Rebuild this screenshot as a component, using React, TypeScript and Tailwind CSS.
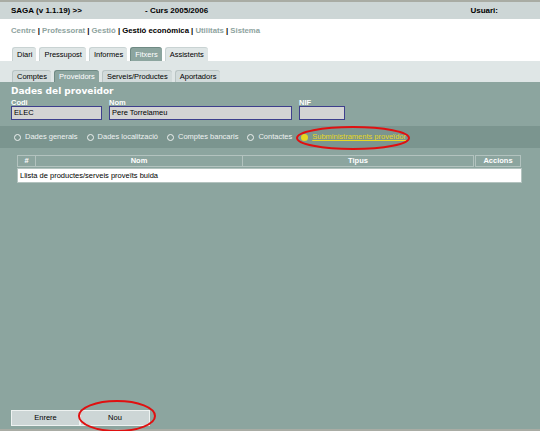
export default function App() {
  const tabs = ["Diari", "Pressupost", "Informes", "Fitxers", "Assistents"];
  const subTabs = ["Comptes", "Proveidors", "Serveis/Productes", "Aportadors"];
  const radios = ["Dades generals", "Dades localització", "Comptes bancaris", "Contactes"];

  return (
    <div className="relative flex h-[431px] w-[540px] flex-col overflow-hidden bg-[#8ca59f] font-['Liberation_Sans',Arial,sans-serif] text-[8px] leading-none text-black">
      {/* top bar */}
      <div className="h-[2px] bg-[#a9aca4]" />
      <div className="flex h-[17px] items-center bg-[#cdd6d6] font-bold">
        <span className="ml-[11px] w-[134px]">SAGA (v 1.1.19) &gt;&gt;</span>
        <span>- Curs 2005/2006</span>
        <span className="ml-auto mr-[42px]">Usuari:</span>
      </div>

      {/* menu */}
      <div className="flex h-[42px] flex-col bg-white">
        <div className="ml-[11px] mt-[8px] text-[7.75px] font-bold text-[#8ea39e]">
          Centre <span className="text-black">|</span> Professorat <span className="text-black">|</span> Gestió{" "}
          <span className="text-black">| Gestió econòmica |</span> Utilitats <span className="text-black">|</span> Sistema
        </div>
        <div className="mt-auto ml-[12px] flex gap-[3px] text-[7.5px]">
          {tabs.map((t) => (
            <div
              key={t}
              className={
                t === "Fitxers"
                  ? "flex h-[14px] items-center rounded-t-[3px] border-l border-t border-[#6f8a84] bg-[#8ca59f] px-[4px] text-white"
                  : "flex h-[14px] items-center rounded-t-[3px] border-l border-t border-[#c9d3d3] bg-[#dfe6e6] px-[4px]"
              }
            >
              {t}
            </div>
          ))}
        </div>
      </div>

      {/* sub menu */}
      <div className="flex h-[21px] flex-col bg-[#dfe6e6]">
        <div className="mt-auto ml-[12px] flex gap-[3px] text-[7.5px]">
          {subTabs.map((t) => (
            <div
              key={t}
              className={
                t === "Proveidors"
                  ? "flex h-[12px] items-center rounded-t-[3px] border-l border-t border-[#6f8a84] bg-[#8ca59f] px-[4px] text-white"
                  : "flex h-[12px] items-center rounded-t-[3px] border-l border-t border-[#b9c4c4] bg-[#d2dbdb] px-[4px]"
              }
            >
              {t}
            </div>
          ))}
        </div>
      </div>

      {/* provider header */}
      <div className="px-[11px] pt-[5px]">
        <div className="font-['DejaVu_Sans',Verdana,sans-serif] text-[9px] font-bold text-white">
          Dades del proveidor
        </div>
        <div className="mt-[3px] flex">
          <div className="w-[98px]">
            <div className="h-[7px] text-[7.5px] font-bold text-white">Codi</div>
            <div className="flex h-[14px] w-[91px] items-center border border-[#3e3f8c] bg-[#d4d4d4] pl-[2px] text-[7.5px]">ELEC</div>
          </div>
          <div className="w-[190px]">
            <div className="h-[7px] text-[7.5px] font-bold text-white">Nom</div>
            <div className="flex h-[14px] w-[183px] items-center border border-[#3e3f8c] bg-[#d4d4d4] pl-[2px] text-[7.5px]">Pere Torrelameu</div>
          </div>
          <div>
            <div className="h-[7px] text-[7.5px] font-bold text-white">NIF</div>
            <div className="h-[14px] w-[46px] border border-[#3e3f8c] bg-[#d4d4d4]" />
          </div>
        </div>
      </div>

      {/* options */}
      <div className="mt-[6px] flex h-[22px] items-center bg-[#7b958f] pl-[14px] text-[7.5px] text-[#eef2f1]">
        {radios.map((r) => (
          <div key={r} className="mr-[9px] flex items-center gap-[4px]">
            <span className="h-[7px] w-[7px] rounded-full border border-[#eef2f1]" />
            <span>{r}</span>
          </div>
        ))}
        <div className="flex items-center gap-[4px]">
          <span className="h-[7px] w-[7px] rounded-full bg-[#e6d822]" />
          <span className="text-[#e6d822] underline">Subministraments proveïdor</span>
        </div>
      </div>

      {/* table */}
      <div className="ml-[17px] mt-[7px] w-[505px] text-[7.5px]">
        <div className="flex h-[12px] font-bold text-white">
          <div className="flex w-[19px] items-center justify-center border border-[#b3c3bf] bg-[#8ca59f]">#</div>
          <div className="flex w-[207px] items-center justify-center border border-l-0 border-[#b3c3bf] bg-[#8ca59f]">Nom</div>
          <div className="flex w-[231px] items-center justify-center border border-l-0 border-[#b3c3bf] bg-[#8ca59f]">Tipus</div>
          <div className="ml-[1px] flex w-[46px] items-center justify-center border border-[#b3c3bf] bg-[#8ca59f]">Accions</div>
        </div>
        <div className="mt-[1px] flex h-[15px] items-center border border-[#b3c3bf] bg-white pl-[2px]">
          Llista de productes/serveis proveïts buida
        </div>
      </div>

      {/* buttons */}
      <div className="mt-auto ml-[11px] mb-[3px] flex text-[7.5px]">
        <div className="flex h-[16px] w-[69px] items-center justify-center border border-[#eef2f1] bg-[#cdd6d6]">Enrere</div>
        <div className="flex h-[16px] w-[70px] items-center justify-center border border-[#eef2f1] bg-[#cdd6d6]">Nou</div>
      </div>
      <div className="h-[2px] bg-[#a9aca4]" />

      {/* red annotations */}
      <svg className="pointer-events-none absolute left-0 top-0" width="540" height="431">
        <ellipse cx="353" cy="138" rx="56" ry="11" fill="none" stroke="#e01010" strokeWidth="2" />
        <ellipse cx="117" cy="416" rx="38" ry="15" fill="none" stroke="#e01010" strokeWidth="2" />
      </svg>
    </div>
  );
}
